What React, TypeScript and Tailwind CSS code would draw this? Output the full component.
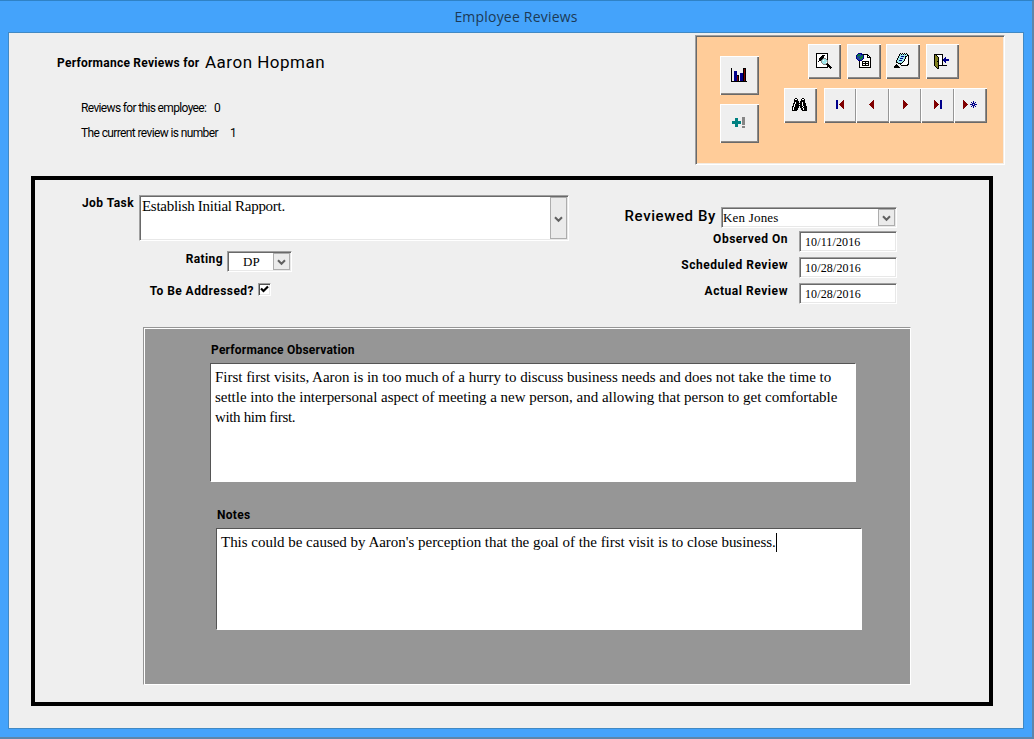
import React from 'react';

const PALETTE: Record<string, string> = {
  k: '#000000',
  n: '#00008b',
  r: '#800000',
  t: '#008080',
  c: '#9fe8ec',
  w: '#ffffff',
  g: '#868686',
  o: '#808020',
  e: '#0a7a3c',
  b: '#2040a0',
};

function Pixels({ x, y, rows }: { x: number; y: number; rows: string[] }) {
  return (
    <g shapeRendering="crispEdges">
      {rows.flatMap((row, j) =>
        row.split('').map((c, i) =>
          PALETTE[c] ? (
            <rect key={`${i}-${j}`} x={x + i} y={y + j} width={1} height={1} fill={PALETTE[c]} />
          ) : null,
        ),
      )}
    </g>
  );
}

const CHART = [
  'k...........kkk.',
  'k...........krk.',
  'k...........krk.',
  'k..nnn......krk.',
  'k..nnn......krk.',
  'k..nnn...nnnkrk.',
  'k..nnn...nnnkrk.',
  'k..nnnkk.nnnkrk.',
  'k..nnnrk.nnnkrk.',
  'k..nnnrk.nnnkrk.',
  'k..nnnrk.nnnkrk.',
  'k..nnnrk.nnnkrk.',
  'k..nnnrk.nnnkrk.',
  'kkkkkkkkkkkkkkkk',
];
const PLUS = [
  '..........ggg',
  '...ttt....ggg',
  '...ttt....ggg',
  '...ttt....ggg',
  'ttttttttt.ggg',
  'ttttttttt.ggg',
  'ttttttttt.ggg',
  '...ttt....ggg',
  '...ttt.......',
  '...ttt....ggg',
  '..........ggg',
];
const PREVIEW = [
  'kkkkkkkkkkkk....',
  'kwwwwwwwwwwk....',
  'kwwwwwkkkwwk....',
  'kwwwwkkkwwwk....',
  'kwwwkkkkwwwk....',
  'kwwkkkkgggwk....',
  'kwwkkkgcccgk....',
  'kwwkkgcwcccg....',
  'kwkwwgcccccg....',
  'kwwwwgccccwg....',
  'kwwwwwgcccgk....',
  'kwwwwwwgggkkk...',
  'kwwwwwwwwwwkkk..',
  'kwwwwwwwwwwkkkk.',
  'kkkkkkkkkkkk.kkk',
  '..............k.',
];
const GLOBE = [
  '..nnnn..........',
  '.neebnnkkkkk....',
  'neeebbenwwwkk...',
  'nebbbeenwwwkwk..',
  'nbbeeeenwwwkkkk.',
  'nbbbeebnwwwwwwk.',
  '.nbbebnwwwwwwwk.',
  '..nnnnwwwwwwwwk.',
  '...kwwkkkkkkkwk.',
  '...kwwkwwkwwkwk.',
  '...kwwkkkkkkkwk.',
  '...kwwkwwkwwkwk.',
  '...kwwkkkkkkkwk.',
  '...kwwwwwwwwwwk.',
  '...kkkkkkkkkkkk.',
];
const NOTEPAD = [
  '......k.k.k.k...',
  '.....kckckckck..',
  '.....kccccccckk.',
  '....kccnnnckkwk.',
  '....kcccccckwwk.',
  '...kccnnncckwwk.',
  '...kcccccckwwwk.',
  '..kccnnncckwwwk.',
  '..kcccccckwwwwk.',
  '..kkcccckwwwwwk.',
  '....kkkkwwwwwwk.',
  '..k...kwwwwwwkk.',
  '.kkk...kkkkkkk..',
  'kkkkk...........',
  'kkkkkk..........',
];
const DOOR = [
  'kkkkkkkkk.......',
  'kokwwwwwk.......',
  'kookwwwwk.......',
  'koookwwwk..n....',
  'koookwwwk.nn....',
  'koookwwwknnnnnn.',
  'koookwwwknnnnnn.',
  'kookkwwwk.nn....',
  'koookwwwk..n....',
  'koookwwwk.......',
  'koookwwwk.......',
  'koookkkkkkkkk...',
  '.kook...........',
  '..kok...........',
  '...kk...........',
];
const BINOCULARS = [
  '...kk.....kk...',
  '..kwwk...kwwk..',
  '..kkkk...kkkk..',
  '..kkkkk.kkkkk..',
  '..kwkkk.kkwkk..',
  '.kkwkkkkkkwkkk.',
  '.kwkkkkwkkwkkk.',
  '.kwkkkkkkkwkkk.',
  'kkwkkkk.kkkwkkk',
  'kwkkkkk.kkwkkkk',
  'kwkkkk...kkwkkk',
  'kwkkkk...kkwkkk',
  'kkkkk.....kkkkk',
];
const LEFT = ['....r', '...rr', '..rrr', '.rrrr', 'rrrrr', '.rrrr', '..rrr', '...rr', '....r'];
const RIGHT = ['r', 'rr', 'rrr', 'rrrr', 'rrrrr', 'rrrr', 'rrr', 'rr', 'r'];
const BAR = Array<string>(9).fill('nn');
const STAR = ['...n...', '.n.n.n.', '..nnn..', 'nnn.nnn', '..nnn..', '.n.n.n.', '...n...'];

const RAISED = 'shadow-[inset_1px_1px_0_#ffffff,inset_-1px_-1px_0_#696969,inset_-2px_-2px_0_#8f8b88]';
const JOINED = 'shadow-[inset_1px_0_0_#ffffff,inset_0_1px_0_#ffffff,inset_0_-1px_0_#696969,inset_-1px_0_0_#969696,inset_0_-2px_0_#8f8b88]';

function Tool({ label, w, h, className = RAISED, children }: {
  label: string; w: number; h: number; className?: string; children: React.ReactNode;
}) {
  return (
    <button aria-label={label} className={`block shrink-0 bg-[#efefef] ${className}`}>
      <svg width={w} height={h} viewBox={`0 0 ${w} ${h}`} className="block">{children}</svg>
    </button>
  );
}

const FIELD = 'border border-t-[#a0a0a0] border-l-[#a0a0a0] border-r-white border-b-white bg-white p-px shadow-[inset_1px_1px_0_#696969,inset_-1px_-1px_0_#e8e8e8]';
const SERIF = "font-['Liberation_Serif',serif]";
const LABEL = 'text-[12px] leading-[16px] font-bold whitespace-nowrap';

function DropButton() {
  return (
    <span className="flex w-[17px] shrink-0 items-center justify-center border border-[#adadad] bg-[#ebebeb]">
      <svg width="9" height="7" viewBox="0 0 9 7" className="mt-0.5">
        <path d="M1 1.2 4.5 4.8 8 1.2" fill="none" stroke="#606060" strokeWidth="2" />
      </svg>
    </span>
  );
}

function DateRow({ label, value, tracking }: { label: string; value: string; tracking: string }) {
  return (
    <div className="flex h-[21px] justify-end">
      <span className={`${LABEL} mr-[11px] ${tracking}`}>{label}</span>
      <div className={`${FIELD} w-[98px]`}>
        <span className={`${SERIF} block pl-1 text-[12px] leading-[18px] tracking-[0.12px]`}>{value}</span>
      </div>
    </div>
  );
}

export default function App() {
  return (
    <div className="flex h-[739px] w-[1034px] flex-col overflow-hidden border-t border-r-2 border-b-2 border-t-[#2f82c6] border-r-[#5c86ab] border-b-[#5c86ab] bg-[#44a3fb] pr-[8px] pl-2 font-['Roboto',sans-serif] text-black">
      <header className="flex h-[31px] shrink-0 items-center justify-center font-['Open_Sans',sans-serif] text-[14px] text-[#1c3a56]">
        <h1 className="tracking-[0.2px]">Employee Reviews</h1>
      </header>
      <main className="h-[697px] w-[1016px] border border-[#4189c4] bg-[#efefef]">
        <section className="flex h-[143px] justify-between pt-[2px] pr-[18px]">
          <div className="pt-[16px] pl-[48px]">
            <div className="flex h-6 items-center whitespace-nowrap">
              <span className="w-[148px] text-[12px] font-bold tracking-[0.25px]">Performance Reviews for</span>
              <span className="text-[17px] tracking-[0.5px]">Aaron Hopman</span>
            </div>
            <div className="mt-[25px] flex h-4 items-center pl-6 text-[12px] whitespace-nowrap">
              <span className="w-[133px] tracking-[-0.65px]">Reviews for this employee:</span>
              <span>0</span>
            </div>
            <div className="mt-[9px] flex h-4 items-center pl-6 text-[12px] whitespace-nowrap">
              <span className="w-[149px] tracking-[-0.62px]">The current review is number</span>
              <span>1</span>
            </div>
          </div>
          <div className="flex h-[130px] w-[310px] border border-t-[#a0a0a0] border-r-white border-b-white border-l-[#a0a0a0] bg-[#ffcc99] p-px shadow-[inset_1px_1px_0_#696969,inset_-1px_-1px_0_#f3ece4]">
            <div className="flex flex-col gap-[9px] pt-[19px] pl-[23px]">
              <Tool label="Chart" w={39} h={39}><Pixels x={11} y={12} rows={CHART} /></Tool>
              <Tool label="Add" w={39} h={39}><Pixels x={12} y={13} rows={PLUS} /></Tool>
            </div>
            <div className="ml-[25px] flex flex-col gap-[9px] pt-[7px]">
              <div className="flex pl-6">
                <Tool label="Preview" w={33} h={35}><Pixels x={8} y={9} rows={PREVIEW} /></Tool>
                <div className="ml-[6px] flex gap-[5px]">
                  <Tool label="Publish" w={34} h={35}><Pixels x={9} y={9} rows={GLOBE} /></Tool>
                  <Tool label="Notes" w={34} h={35}><Pixels x={8} y={9} rows={NOTEPAD} /></Tool>
                </div>
                <div className="ml-[6px]">
                  <Tool label="Close" w={33} h={35}><Pixels x={8} y={10} rows={DOOR} /></Tool>
                </div>
              </div>
              <div className="flex gap-[7px]">
                <Tool label="Find" w={33} h={35}><Pixels x={8} y={10} rows={BINOCULARS} /></Tool>
                <div className="flex">
                  <Tool label="First" w={32} h={35} className={JOINED}>
                    <Pixels x={12} y={12} rows={BAR} />
                    <Pixels x={15} y={12} rows={LEFT} />
                  </Tool>
                  <Tool label="Previous" w={33} h={35} className={JOINED}><Pixels x={13} y={12} rows={LEFT} /></Tool>
                  <Tool label="Next" w={32} h={35} className={JOINED}><Pixels x={14} y={12} rows={RIGHT} /></Tool>
                  <Tool label="Last" w={33} h={35} className={JOINED}>
                    <Pixels x={13} y={12} rows={RIGHT} />
                    <Pixels x={19} y={12} rows={BAR} />
                  </Tool>
                  <Tool label="New" w={33} h={35}>
                    <Pixels x={9} y={12} rows={RIGHT} />
                    <Pixels x={16} y={13} rows={STAR} />
                  </Tool>
                </div>
              </div>
            </div>
          </div>
        </section>

        <section className="ml-[22px] h-[530px] w-[962px] border-4 border-black">
          <div className="flex h-[147px] justify-between pr-[92px]">
            <div className="pt-[15px]">
              <div className="flex h-[46px]">
                <span className={`${LABEL} w-[99px] text-right tracking-[0.45px]`}>Job Task</span>
                <div className={`${FIELD} ml-[5px] flex w-[430px] justify-between`}>
                  <span className={`${SERIF} pl-[1px] text-[15px] leading-[19px] tracking-[-0.29px]`}>Establish Initial Rapport.</span>
                  <DropButton />
                </div>
              </div>
              <div className="mt-[10px] flex h-[21px]">
                <span className={`${LABEL} w-[188px] text-right tracking-[0.4px]`}>Rating</span>
                <div className={`${FIELD} ml-[4px] flex w-[65px] justify-between`}>
                  <span className={`${SERIF} pl-[14px] text-[13px] leading-[18px]`}>DP</span>
                  <DropButton />
                </div>
              </div>
              <div className="mt-[11px] flex">
                <span className={`${LABEL} w-[219px] text-right tracking-[0.45px]`}>To Be Addressed?</span>
                <span className="ml-1 flex size-[13px] border border-t-[#a0a0a0] border-r-white border-b-white border-l-[#a0a0a0] bg-white p-px shadow-[inset_1px_1px_0_#505050,inset_-1px_-1px_0_#e8e8e8]">
                  <svg width="9" height="9" viewBox="0 0 9 9">
                    <path d="M1 3.5 3.5 6 8 1.5" fill="none" stroke="#000" strokeWidth="2.2" />
                  </svg>
                </span>
              </div>
            </div>
            <div className="flex flex-col pt-[27px]">
              <div className="flex h-[21px] justify-end">
                <span className="mr-[5px] text-[15px] leading-[19px] font-medium tracking-[0.6px] whitespace-nowrap">Reviewed By</span>
                <div className={`${FIELD} flex w-[176px] justify-between`}>
                  <span className={`${SERIF} text-[13px] leading-[18px] tracking-[0.2px]`}>Ken Jones</span>
                  <DropButton />
                </div>
              </div>
              <div className="mt-[3px] flex flex-col gap-[5px]">
                <DateRow label="Observed On" value="10/11/2016" tracking="tracking-[0.5px]" />
                <DateRow label="Scheduled Review" value="10/28/2016" tracking="tracking-[0.52px]" />
                <DateRow label="Actual Review" value="10/28/2016" tracking="tracking-[0.55px]" />
              </div>
            </div>
          </div>

          <div className="ml-[108px] h-[358px] w-[768px] border border-t-[#969696] border-r-white border-b-white border-l-[#969696]">
            <div className="h-full border-t border-l border-white bg-[#969696] pt-[13px] pl-[65px]">
              <h2 className={`${LABEL} pl-px tracking-[0.22px]`}>Performance Observation</h2>
              <div className={`${SERIF} mt-[5px] h-[119px] w-[646px] border border-t-[#555] border-r-white border-b-white border-l-[#555] bg-white pt-[3px] pl-1 text-[15px] leading-5 tracking-[-0.02px] whitespace-nowrap`}>
                <p>First first visits, Aaron is in too much of a hurry to discuss business needs and does not take the time to</p>
                <p>settle into the interpersonal aspect of meeting a new person, and allowing that person to get comfortable</p>
                <p className="tracking-[-0.35px]">with him first.</p>
              </div>
              <h2 className={`${LABEL} mt-[25px] pl-[7px] tracking-[0.3px]`}>Notes</h2>
              <div className={`${SERIF} mt-[5px] ml-[6px] h-[102px] w-[646px] border border-t-[#555] border-r-white border-b-white border-l-[#555] bg-white pt-[3px] pl-1 text-[15px] leading-5 tracking-[-0.02px] whitespace-nowrap`}>
                <p className="flex items-center">
                  This could be caused by Aaron's perception that the goal of the first visit is to close business.
                  <span className="h-[19px] w-px bg-black" />
                </p>
              </div>
            </div>
          </div>
        </section>
      </main>
    </div>
  );
}
